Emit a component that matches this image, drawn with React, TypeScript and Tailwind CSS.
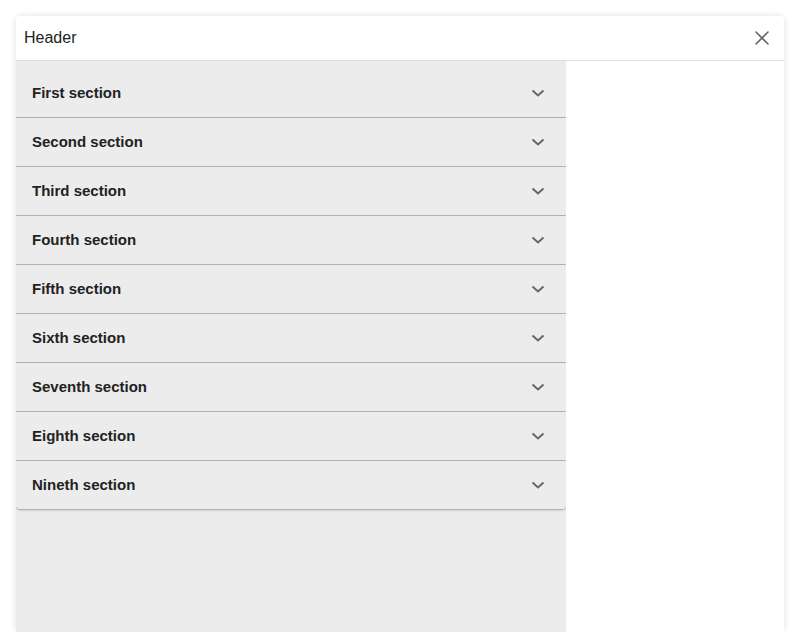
import { X } from 'lucide-react'

const sections = [
  'First section',
  'Second section',
  'Third section',
  'Fourth section',
  'Fifth section',
  'Sixth section',
  'Seventh section',
  'Eighth section',
  'Nineth section',
]

function Chevron() {
  return (
    <svg width="24" height="24" viewBox="0 0 24 24" className="text-[#666]">
      <path d="M6.5 9.5 L12 14.5 L17.5 9.5" fill="none" stroke="currentColor" strokeWidth="2" />
    </svg>
  )
}

export default function App() {
  return (
    <div className="h-screen overflow-hidden bg-white px-4 pt-4 font-['Liberation_Sans',Arial,sans-serif]">
      <div className="h-full rounded-t-[4px] bg-white shadow-[0_0_6px_rgba(0,0,0,0.12)] flex flex-col overflow-hidden">
        {/* Header */}
        <div className="h-[45px] shrink-0 flex items-center justify-between pl-2 pr-[10px] border-b border-[#dddddd]">
          <span className="text-[16px] text-[#222]">Header</span>
          <X size={24} strokeWidth={1.6} className="text-[#666]" />
        </div>

        <div className="flex flex-1">
          {/* Sidebar */}
          <div className="w-[550px] bg-[#ececec] pt-[8px]">
            {sections.map((s, i) => (
              <div
                key={s}
                className={`h-[49px] flex items-center justify-between pl-4 pr-4 border-b border-[#b0b0b0] ${
                  i === sections.length - 1 ? 'rounded-b-[4px] shadow-[0_1px_2px_rgba(0,0,0,0.1)]' : ''
                }`}
              >
                <span className="text-[15px] font-bold text-[#222]">{s}</span>
                <Chevron />
              </div>
            ))}
          </div>
          <div className="flex-1 bg-white" />
        </div>
      </div>
    </div>
  )
}
